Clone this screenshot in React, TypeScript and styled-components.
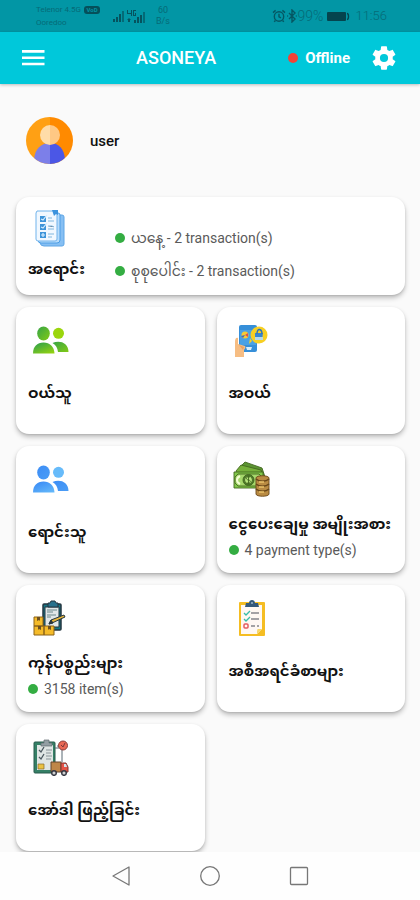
import React from "react";
import styled, { createGlobalStyle } from "styled-components";

const GlobalStyle = createGlobalStyle`
  *, *::before, *::after { box-sizing: border-box; }
  body {
    margin: 0;
    background: #fafafa;
    color: #111;
    font-family: Roboto, "Noto Sans Myanmar", "Noto Sans", sans-serif;
  }
  button { font: inherit; color: inherit; border: 0; padding: 0; background: none; cursor: pointer; }
`;

const Screen = styled.div`
  display: flex;
  flex-direction: column;
  height: 100vh;
  overflow: hidden;
`;

const StatusBar = styled.div`
  flex: none;
  display: flex;
  align-items: center;
  height: 32px;
  padding: 0 33px 0 36px;
  background: #0296a5;
  color: #066b77;
`;

const Carriers = styled.div`
  width: 76px;
  font-size: 8px;
  line-height: 13px;
`;

const CarrierLine = styled.div`
  display: flex;
  align-items: center;
  gap: 3px;
  white-space: nowrap;
`;

const VoBadge = styled.span`
  width: 16px;
  height: 8px;
  border-radius: 3px;
  background: #05505b;
  color: #0296a5;
  font-size: 6px;
  font-weight: 700;
  line-height: 8px;
  text-align: center;
`;

const Speed = styled.div`
  margin-left: 9px;
  font-size: 9px;
  line-height: 11px;
  text-align: center;
`;

const StatusRight = styled.div`
  display: flex;
  align-items: center;
  margin-left: auto;
  font-size: 14px;
  font-weight: 300;
  line-height: 16px;
`;

const Clock = styled.span`
  font-size: 13px;
`;

const BatteryGap = styled.span`
  display: flex;
  margin: 0 5px 0 4px;
`;

const AppBar = styled.header`
  flex: none;
  z-index: 1;
  display: grid;
  grid-template-columns: auto 1fr auto;
  align-items: center;
  height: 52px;
  padding: 0 22px 0 20px;
  background: #00c8da;
  color: #fff;
  box-shadow: 0 1px 3px rgba(0, 0, 0, 0.25);
`;

const IconButton = styled.button`
  display: flex;
`;

const AppTitle = styled.h1`
  margin: 0;
  padding-left: 18px;
  font-size: 18px;
  font-weight: 500;
  line-height: 24px;
  text-align: center;
`;

const Actions = styled.div`
  display: flex;
  align-items: center;
  gap: 20px;
`;

const Connection = styled.div`
  display: flex;
  align-items: center;
  gap: 7px;
  font-size: 15px;
  font-weight: 700;
  line-height: 20px;
`;

const Dot = styled.span<{ $color: string }>`
  flex: none;
  width: 10px;
  height: 10px;
  border-radius: 50%;
  background: ${(p) => p.$color};
`;

const Content = styled.main`
  flex: 1;
  min-height: 0;
  overflow: hidden;
  padding: 0 15px 0 16px;
`;

const Profile = styled.section`
  display: flex;
  align-items: center;
  gap: 17px;
  padding: 33px 10px;
  font-size: 15px;
  font-weight: 500;
  line-height: 20px;
`;

const CardGrid = styled.div`
  display: grid;
  grid-template-columns: 1fr 1fr;
  gap: 12px;
`;

const Card = styled.button<{ $wide?: boolean }>`
  display: flex;
  flex-direction: ${(p) => (p.$wide ? "row" : "column")};
  align-items: flex-start;
  gap: ${(p) => (p.$wide ? "30px" : "0")};
  grid-column: ${(p) => (p.$wide ? "1 / -1" : "auto")};
  height: ${(p) => (p.$wide ? "98px" : "127px")};
  padding: ${(p) => (p.$wide ? "12px" : "14px 0 0 12px")};
  border-radius: 13px;
  background: #fff;
  box-shadow: 0 3px 5px rgba(0, 0, 0, 0.24), 0 1px 2px rgba(0, 0, 0, 0.1);
  text-align: left;
`;

const IconSlot = styled.span`
  display: flex;
  margin-left: 4px;
`;

const CardTitle = styled.span<{ $space: number }>`
  display: block;
  margin-top: ${(p) => p.$space}px;
  font-size: 15px;
  font-weight: 700;
  line-height: 28px;
  white-space: nowrap;
`;

const Detail = styled.span`
  display: flex;
  align-items: center;
  gap: 6px;
  font-size: 14px;
  font-weight: 400;
  line-height: 24px;
  color: #5a5a5a;
  white-space: nowrap;
`;

const Totals = styled.span`
  display: flex;
  flex-direction: column;
  gap: 9px;
  padding-top: 17px;
`;

const NavBar = styled.nav`
  flex: none;
  display: flex;
  align-items: center;
  justify-content: center;
  gap: 65px;
  height: 48px;
  background: #fefefe;
`;

const Signal = () => (
  <svg width="14" height="12" viewBox="0 0 14 12" fill="#05535e">
    <rect x="1" y="9" width="2" height="3" />
    <rect x="4" y="7" width="2" height="5" />
    <rect x="7" y="4" width="2" height="8" />
    <rect x="10" y="1" width="2" height="11" opacity=".65" />
  </svg>
);

const DataSignal = () => (
  <svg width="21" height="15" viewBox="0 0 21 15" fill="#05535e">
    <path d="M2 1v3h3V1h1v6H5V5H1V1zM8 1h2v1H8v4h1V4h1v3H7V1zM3 9l2 2H4v2H2v-2H1z" />
    <rect x="8" y="11" width="2" height="3" />
    <rect x="11" y="8" width="2" height="6" />
    <rect x="14" y="6" width="2" height="8" />
    <rect x="17" y="3" width="2" height="11" opacity=".65" />
  </svg>
);

const AlarmIcon = () => (
  <svg width="14" height="14" viewBox="0 0 14 14" fill="none" stroke="#055763" strokeWidth="1.4">
    <circle cx="7" cy="7.5" r="4.7" />
    <path d="M7 4.8v3l2 1M1 3.6 3.6 1.4M13 3.6l-2.6-2.2M3.5 11.4l-1.3 1.4M10.5 11.4l1.3 1.4" />
  </svg>
);

const BluetoothIcon = () => (
  <svg width="12" height="14" viewBox="0 0 12 14" fill="none" stroke="#055763" strokeWidth="1.4">
    <path d="m3 4 6 6-3 3V1l3 3-6 6M1.2 7h.9M9.8 7h.9" />
  </svg>
);

const BatteryIcon = () => (
  <svg width="23" height="9" viewBox="0 0 23 9">
    <rect width="19" height="9" rx="1" fill="#05444e" />
    <path d="M20 1.5c2 0 2 6 0 6" fill="none" stroke="#05444e" strokeWidth="1.4" />
  </svg>
);

const MenuIcon = () => (
  <svg width="26" height="20" viewBox="0 0 26 20" stroke="#fff" strokeWidth="2.6">
    <path d="M2 3.4h22.5M2 9.7h22.5M2 16h22.5" />
  </svg>
);

const GearIcon = () => (
  <svg width="28" height="28" viewBox="0 0 24 24" fill="#fff" fillRule="evenodd">
    <path d="M19.43 12.98c.04-.32.07-.64.07-.98s-.03-.66-.07-.98l2.11-1.65c.19-.15.24-.42.12-.64l-2-3.46c-.12-.22-.39-.3-.61-.22l-2.49 1c-.52-.4-1.08-.73-1.69-.98l-.38-2.65C14.46 2.18 14.25 2 14 2h-4c-.25 0-.46.18-.49.42l-.38 2.65c-.61.25-1.17.59-1.69.98l-2.49-1c-.23-.09-.49 0-.61.22l-2 3.46c-.13.22-.07.49.12.64l2.11 1.65c-.04.32-.07.65-.07.98s.03.66.07.98l-2.11 1.65c-.19.15-.24.42-.12.64l2 3.46c.12.22.39.3.61.22l2.49-1c.52.4 1.08.73 1.69.98l.38 2.65c.03.24.24.42.49.42h4c.25 0 .46-.18.49-.42l.38-2.65c.61-.25 1.17-.59 1.69-.98l2.49 1c.23.09.49 0 .61-.22l2-3.46c.12-.22.07-.49-.12-.64zM12 15.5a3.5 3.5 0 1 1 0-7 3.5 3.5 0 0 1 0 7z" />
  </svg>
);

const Avatar = () => (
  <svg width="47" height="47" viewBox="0 0 47 47" role="img" aria-label="Profile">
    <defs>
      <clipPath id="avatar-circle"><circle cx="23.5" cy="23.5" r="23.5" /></clipPath>
    </defs>
    <g clipPath="url(#avatar-circle)">
      <path d="M0 0h24v47H0z" fill="#ffa014" />
      <path d="M24 0h23v47H24z" fill="#ff8a00" />
      <path d="M8 42c1-10 7-16 16-16v21H8z" fill="#7c7fe9" />
      <path d="M24 26c9 0 14 6 15 16l-3 5H24z" fill="#4b57e6" />
      <path d="M24 8a10 10 0 0 0 0 20z" fill="#ffdca8" />
      <path d="M24 8a10 10 0 0 1 0 20z" fill="#ffc884" />
    </g>
  </svg>
);

const SalesIcon = () => (
  <svg width="36" height="38" viewBox="0 0 36 38">
    <path d="M10 6h20a2 2 0 0 1 2 2v27a2 2 0 0 1-2 2H12a4 4 0 0 1-4-3z" fill="#86bff3" stroke="#5fa6e6" />
    <path d="M7 4h19a2 2 0 0 1 2 2v25a3 3 0 0 1-3 3H9a3 3 0 0 1-3-3z" fill="#b8dcfb" stroke="#4c9ee5" />
    <path d="M5 2h20v28a2 2 0 0 1-2 2H6a2 2 0 0 1-2-2V4z" fill="#f1f8ff" stroke="#70b3ec" />
    <path d="M20 1h6v5l-2-1-2 2z" fill="#3d93dd" />
    <path d="M8 7h6v6H8zM8 15h6v6H8zM8 23h6v6H8z" fill="#3e94d9" />
    <path d="m9 10 2 1 4-5M9 18l2 1 4-5M9 26h4M11 24v4" fill="none" stroke="#d5edff" strokeWidth="1.2" />
    <path d="M16 9h4M16 12h6M16 17h4l2 1M16 20h6M16 25h6M16 28h4" stroke="#80b7df" />
  </svg>
);

const PeopleIcon = ({ id, colors }: { id: string; colors: [string, string, string] }) => (
  <svg width="38" height="38" viewBox="0 0 38 38">
    <defs>
      <linearGradient id={`${id}-front`} x2="1" y2="1">
        <stop stopColor={colors[0]} /><stop offset="1" stopColor={colors[1]} />
      </linearGradient>
      <linearGradient id={`${id}-body`} x1=".3" y2="1">
        <stop stopColor={colors[0]} /><stop offset="1" stopColor={colors[2]} />
      </linearGradient>
    </defs>
    <ellipse cx="11.5" cy="12.5" rx="6.3" ry="7" fill={`url(#${id}-front)`} />
    <path d="M1 32.5c0-7 4-11 10.5-11S22 25.5 22.5 32.5z" fill={`url(#${id}-body)`} />
    <circle cx="26.5" cy="12.3" r="5.5" fill={colors[2]} />
    <path d="M20.5 22c7-3 16-.5 16 9H26c-.5-4-2-7-5.5-9z" fill={`url(#${id}-front)`} />
  </svg>
);

const PurchaseIcon = () => (
  <svg width="38" height="38" viewBox="0 0 38 38">
    <rect x="6" y="4" width="18" height="27" rx="2" fill="#368fd9" />
    <path d="M7 9h16v15H7z" fill="#49a1e5" />
    <circle cx="12" cy="14" r="3.5" fill="#f7ca35" />
    <path d="m12 14 3-2v4z" fill="#df5051" />
    <path d="m12 14-4 1 2 2z" fill="#4768b6" />
    <path d="M13 26h6l-1 3h-4z" fill="#d8eefb" />
    <path d="M2 36V21c0-3 1-5 3-4v6l7 2c1 1 0 3-1 4v7z" fill="#f6bd83" />
    <path d="m6 24 5 2-1 3z" fill="#e8a263" />
    <circle cx="26" cy="14" r="8.5" fill="#f7cf23" />
    <path d="m19 20-3 3 1-6z" fill="#f7cf23" />
    <path d="M22 12h8l-1 7h-7z" fill="#3785d1" />
    <path d="M24 13c0-7 5-5 5 0" fill="none" stroke="#3375b8" strokeWidth="1.5" />
    <path d="M22 16h8v3h-8z" fill="#b8d9e6" />
  </svg>
);

const PaymentIcon = () => (
  <svg width="38" height="38" viewBox="0 0 38 38" stroke="#43671f" strokeWidth=".9">
    <path d="m8 6 4-4 17 6 3 9-10-1z" fill="#5b9432" />
    <path d="m3 11 5-6 20 5 3 10H7z" fill="#76b03b" />
    <path d="M1 12h29v16H1z" fill="#82c849" />
    <path d="M5 14h21l3 3v6l-3 3H5l-3-3v-6z" fill="#a6d86c" />
    <path d="M7 16c-4 2-4 6 0 8" fill="none" stroke="#f3ffd4" strokeWidth="2" />
    <circle cx="15.5" cy="20" r="5.5" fill="#497b26" />
    <circle cx="15.5" cy="20" r="4" fill="#b6e57d" />
    <path d="M17 17c-5-1-4 3-1.5 3s3 4-2 3M15.5 16v8" fill="none" />
    <path d="M23 18c0-3 13-3 13 0v16c0 3-13 3-13 0z" fill="#b98b43" stroke="#6d4a1c" />
    <path d="M23 19c3 3 10 3 13 0M23 24c3 3 10 3 13 0M23 29c3 3 10 3 13 0" fill="none" stroke="#684719" strokeWidth="1.5" />
    <path d="M26 22h5M26 27h5M26 32h5" stroke="#ebc36b" strokeWidth="1.5" />
  </svg>
);

const InventoryIcon = () => (
  <svg width="38" height="38" viewBox="0 0 38 38" stroke="#243640">
    <rect x="11" y="5" width="18" height="26" rx="1" fill="#167583" strokeWidth="1.5" />
    <path d="M13 8h14v20H13z" fill="#e1e7e8" />
    <path d="M16 4h2l1-2h4l1 2h2v4H16z" fill="#27718c" />
    <path d="M15 11h10M15 13h6M15 16h9M15 18h4" stroke="#6b878a" />
    <path d="M2 18h9v9H2zM2 27h10v9H2zM12 27h10v9H12z" fill="#f5bb29" stroke="#8b6318" />
    <path d="M5 18h3v4l-1-1-2 1zM6 27h3v4l-2-1-1 1zM16 27h3v4l-2-1-1 1z" fill="#6e501f" stroke="none" />
    <path d="m17 25 2-4 13-5 1 2-13 6z" fill="#e6b43a" />
    <path d="m17 25 2-4 2 3z" fill="#333" />
  </svg>
);

const ReportIcon = () => (
  <svg width="38" height="38" viewBox="0 0 38 38">
    <rect x="6" y="3" width="26" height="34" rx="1" fill="#f5bd22" />
    <path d="M8 6h21v24l-5 5H8z" fill="#fff8f2" />
    <path d="M24 35c0-3 0-5 1-5h4z" fill="#f6d76a" />
    <path d="M13 4h3c0-4 6-4 6 0h3l1 4H12z" fill="#34597a" />
    <circle cx="19" cy="4" r="1" fill="#9cb5c8" />
    <path d="m11 14 2 2 4-4M11 20l2 2 4-4" fill="none" stroke="#37bda8" strokeWidth="1.3" />
    <rect x="11" y="25" width="4" height="4" rx="1" fill="none" stroke="#e35b60" strokeWidth="1.5" />
    <path d="M18 14h8M18 20h8M18 27h4M24 27h2" stroke="#86858b" strokeWidth="1.5" />
  </svg>
);

const OrderIcon = () => (
  <svg width="38" height="38" viewBox="0 0 38 38">
    <rect x="2" y="4" width="21" height="31" rx="1" fill="#358066" stroke="#285a4c" />
    <path d="M5 7h16v25H5z" fill="#dfe5e4" />
    <path d="M9 5h3V2h5v3h3v3H9z" fill="#939ea3" stroke="#626c70" strokeWidth=".7" />
    <path d="m7 12 2 2 3-5M7 19l2 2 3-5" fill="none" stroke="#4c5860" strokeWidth="1.3" />
    <path d="M14 12h6M14 15h5M14 18h6M14 21h5" stroke="#899497" strokeWidth="1.2" />
    <path d="M6 26h6v5H6z" fill="#eac141" stroke="#866c2b" strokeWidth=".7" />
    <path d="M25 8h5v16M23 10h4" fill="none" stroke="#596872" />
    <circle cx="31" cy="7.5" r="4.5" fill="#ea6855" stroke="#8b3e3b" />
    <path d="m29 7 2 2 2-4" fill="none" stroke="#783838" />
    <path d="M19 24h10v10H19z" fill="#bf8648" stroke="#66472f" />
    <path d="M29 25h5l2 4v5h-7z" fill="#e55447" stroke="#7e3733" />
    <path d="M32 26h2l1 3h-3z" fill="#d1e5ec" />
    <g fill="#d1d1d1" stroke="#363943" strokeWidth="1.5"><circle cx="22" cy="35" r="2.3" /><circle cx="32" cy="35" r="2.3" /></g>
  </svg>
);

const green = "#34ad42";

const tiles = [
  { title: "ဝယ်သူ", icon: <PeopleIcon id="customer" colors={["#36a447", "#82ca15", "#9bd60d"]} /> },
  { title: "အဝယ်", icon: <PurchaseIcon /> },
  { title: "ရောင်းသူ", icon: <PeopleIcon id="seller" colors={["#3c8df6", "#4b9df5", "#67bbfa"]} /> },
  { title: "ငွေပေးချေမှု အမျိုးအစား", icon: <PaymentIcon />, detail: "4 payment type(s)" },
  { title: "ကုန်ပစ္စည်းများ", icon: <InventoryIcon />, detail: "3158 item(s)" },
  { title: "အစီအရင်ခံစာများ", icon: <ReportIcon /> },
  { title: "အော်ဒါ ဖြည့်ခြင်း", icon: <OrderIcon /> },
];

export default function App() {
  return (
    <Screen>
      <GlobalStyle />
      <StatusBar>
        <Carriers>
          <CarrierLine>Telenor 4.5G <VoBadge>VoD</VoBadge></CarrierLine>
          <CarrierLine>Ooredoo</CarrierLine>
        </Carriers>
        <Signal />
        <DataSignal />
        <Speed>60<br />B/s</Speed>
        <StatusRight>
          <AlarmIcon />
          <BluetoothIcon />
          <span>99%</span>
          <BatteryGap><BatteryIcon /></BatteryGap>
          <Clock>11:56</Clock>
        </StatusRight>
      </StatusBar>
      <AppBar>
        <IconButton aria-label="Menu"><MenuIcon /></IconButton>
        <AppTitle>ASONEYA</AppTitle>
        <Actions>
          <Connection><Dot $color="#f44336" />Offline</Connection>
          <IconButton aria-label="Settings"><GearIcon /></IconButton>
        </Actions>
      </AppBar>
      <Content>
        <Profile><Avatar />user</Profile>
        <CardGrid>
          <Card $wide>
            <span>
              <IconSlot><SalesIcon /></IconSlot>
              <CardTitle $space={8}>အရောင်း</CardTitle>
            </span>
            <Totals>
              <Detail><Dot $color={green} />ယနေ့ - 2 transaction(s)</Detail>
              <Detail><Dot $color={green} />စုစုပေါင်း - 2 transaction(s)</Detail>
            </Totals>
          </Card>
          {tiles.map((tile) => (
            <Card key={tile.title}>
              <IconSlot>{tile.icon}</IconSlot>
              <CardTitle $space={tile.detail ? 12 : 20}>{tile.title}</CardTitle>
              {tile.detail && <Detail><Dot $color={green} />{tile.detail}</Detail>}
            </Card>
          ))}
        </CardGrid>
      </Content>
      <NavBar>
        <IconButton aria-label="Back">
          <svg width="24" height="24" viewBox="0 0 24 24" fill="none" stroke="#777" strokeWidth="1.3" strokeLinejoin="round"><path d="M20 3v18L4 12z" /></svg>
        </IconButton>
        <IconButton aria-label="Home">
          <svg width="24" height="24" viewBox="0 0 24 24" fill="none" stroke="#777" strokeWidth="1.3"><circle cx="12" cy="12" r="9.3" /></svg>
        </IconButton>
        <IconButton aria-label="Recent apps">
          <svg width="24" height="24" viewBox="0 0 24 24" fill="none" stroke="#777" strokeWidth="1.3"><rect x="3.5" y="3.5" width="17" height="17" rx="1" /></svg>
        </IconButton>
      </NavBar>
    </Screen>
  );
}
